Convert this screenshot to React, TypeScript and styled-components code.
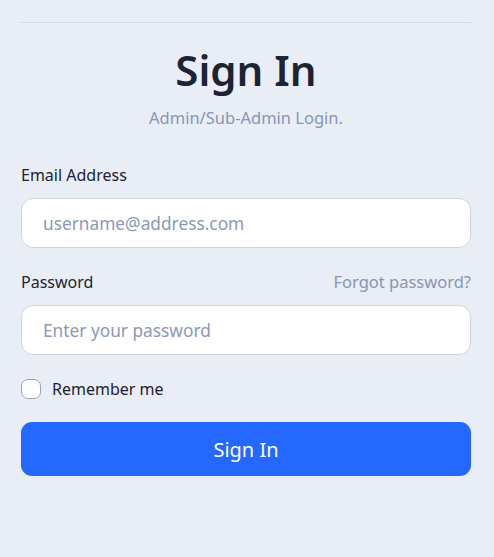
import React from 'react';
import styled, { createGlobalStyle } from 'styled-components'

const GlobalStyle = createGlobalStyle`
  * {
    box-sizing: border-box;
  }
  html, body {
    margin: 0;
    padding: 0;
    background-color: #e9edf5;
    font-family: "Noto Sans", "Open Sans", sans-serif;
  }
`

const Page = styled.main`
  min-height: 557px;
  padding: 22px 23px 0 21px;
`

const Divider = styled.hr`
  margin: 0;
  border: none;
  border-top: 1px solid #d2d7e1;
`

const Header = styled.header`
  display: flex;
  flex-direction: column;
  align-items: center;
  padding-top: 19px;
`

const Title = styled.h1`
  margin: 0;
  font-size: 42px;
  font-weight: 600;
  line-height: 56px;
  color: #1c2333;
`

const Subtitle = styled.p`
  margin: 8px 0 0;
  font-size: 16.5px;
  line-height: 24px;
  color: #8796b4;
`

const Form = styled.form`
  display: flex;
  flex-direction: column;
  padding-top: 34px;
`

const Field = styled.div`
  display: flex;
  flex-direction: column;
  gap: 12px;
  margin-bottom: 22px;
`

const LabelRow = styled.div`
  display: flex;
  justify-content: space-between;
  align-items: baseline;
`

const Label = styled.label`
  font-size: 16px;
  line-height: 22px;
  color: #1c2333;
`

const ForgotLink = styled.a`
  font-size: 16.5px;
  color: #8796b4;
  text-decoration: none;
`

const Input = styled.input`
  width: 100%;
  height: 50px;
  padding: 0 21px;
  border: 1px solid #cfd4df;
  border-radius: 12px;
  background: #ffffff;
  font-family: inherit;
  font-size: 17.3px;
  color: #1c2333;
  outline: none;

  &::placeholder {
    color: #8a99b6;
  }
`

const CheckRow = styled.label`
  display: flex;
  align-items: center;
  gap: 11px;
  margin-top: 1px;
  font-size: 16px;
  color: #1c2333;
`

const Checkbox = styled.input`
  appearance: none;
  margin: 0;
  width: 20px;
  height: 20px;
  border: 1px solid #9aa3b8;
  border-radius: 7px;
  background: #ffffff;
`

const SubmitButton = styled.button`
  margin-top: 22px;
  height: 54px;
  border: none;
  border-radius: 11px;
  background-color: #2468ff;
  color: #ffffff;
  font-family: inherit;
  font-size: 20px;
  cursor: pointer;
`

export default function App() {
    return (
        <>
            <GlobalStyle/>
            <Page>
                <Divider/>
                <Header>
                    <Title>Sign In</Title>
                    <Subtitle>Admin/Sub-Admin Login.</Subtitle>
                </Header>
                <Form onSubmit={e => e.preventDefault()}>
                    <Field>
                        <Label htmlFor='email'>Email Address</Label>
                        <Input id='email' type='email' placeholder='username@address.com'/>
                    </Field>
                    <Field>
                        <LabelRow>
                            <Label htmlFor='password'>Password</Label>
                            <ForgotLink href='#'>Forgot password?</ForgotLink>
                        </LabelRow>
                        <Input id='password' type='password' placeholder='Enter your password'/>
                    </Field>
                    <CheckRow>
                        <Checkbox type='checkbox'/>
                        Remember me
                    </CheckRow>
                    <SubmitButton type='submit'>Sign In</SubmitButton>
                </Form>
            </Page>
        </>
    );
}
